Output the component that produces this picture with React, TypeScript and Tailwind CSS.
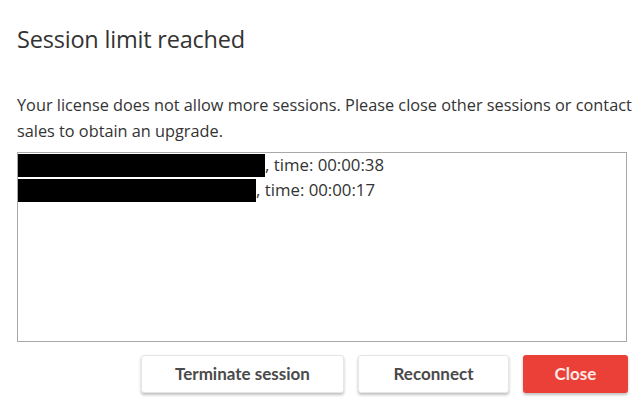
const SESSIONS = [
  { id: "s1", barWidth: 247, time: "00:00:38" },
  { id: "s2", barWidth: 238, time: "00:00:17" },
];

export default function App() {
  return (
    <div className="w-[643px] h-[406px] bg-white overflow-hidden font-['Open_Sans',sans-serif] text-[#333333]">
      <div className="pl-[17px] pr-[10px]">
        <h1 className="pt-[22px] text-[23.5px] leading-[34px] tracking-[-0.2px]">
          Session limit reached
        </h1>

        <p className="mt-[36px] text-[16.3px] leading-[26px]">
          Your license does not allow more sessions. Please close other sessions or contact sales to obtain an upgrade.
        </p>

        {/* list of sessions */}
        <div className="mt-[8px] h-[190px] w-[610px] border border-[#a9a9a9] text-[16.8px]">
          {SESSIONS.map((s) => (
            <div key={s.id} className="flex items-center h-[24px] mb-[1px] leading-[24px]">
              <span className="h-[23px] bg-black shrink-0" style={{ width: s.barWidth }} />
              <span>, time: {s.time}</span>
            </div>
          ))}
        </div>

        {/* actions */}
        <div className="flex justify-end gap-[14px] mt-[13px] w-[611px] font-['Lato',sans-serif] font-bold text-[17px]">
          <button className="w-[203px] h-[38px] bg-white text-[#4a4a4a] rounded-[3px] border border-[#e6e6e6] shadow-[0_2px_3px_rgba(0,0,0,0.25)]">
            Terminate session
          </button>
          <button className="w-[151px] h-[38px] bg-white text-[#4a4a4a] rounded-[3px] border border-[#e6e6e6] shadow-[0_2px_3px_rgba(0,0,0,0.25)]">
            Reconnect
          </button>
          <button className="w-[105px] h-[38px] bg-[#ea4038] text-[#fde8e6] rounded-[3px] shadow-[0_2px_3px_rgba(0,0,0,0.25)]">
            Close
          </button>
        </div>
      </div>
    </div>
  );
}
